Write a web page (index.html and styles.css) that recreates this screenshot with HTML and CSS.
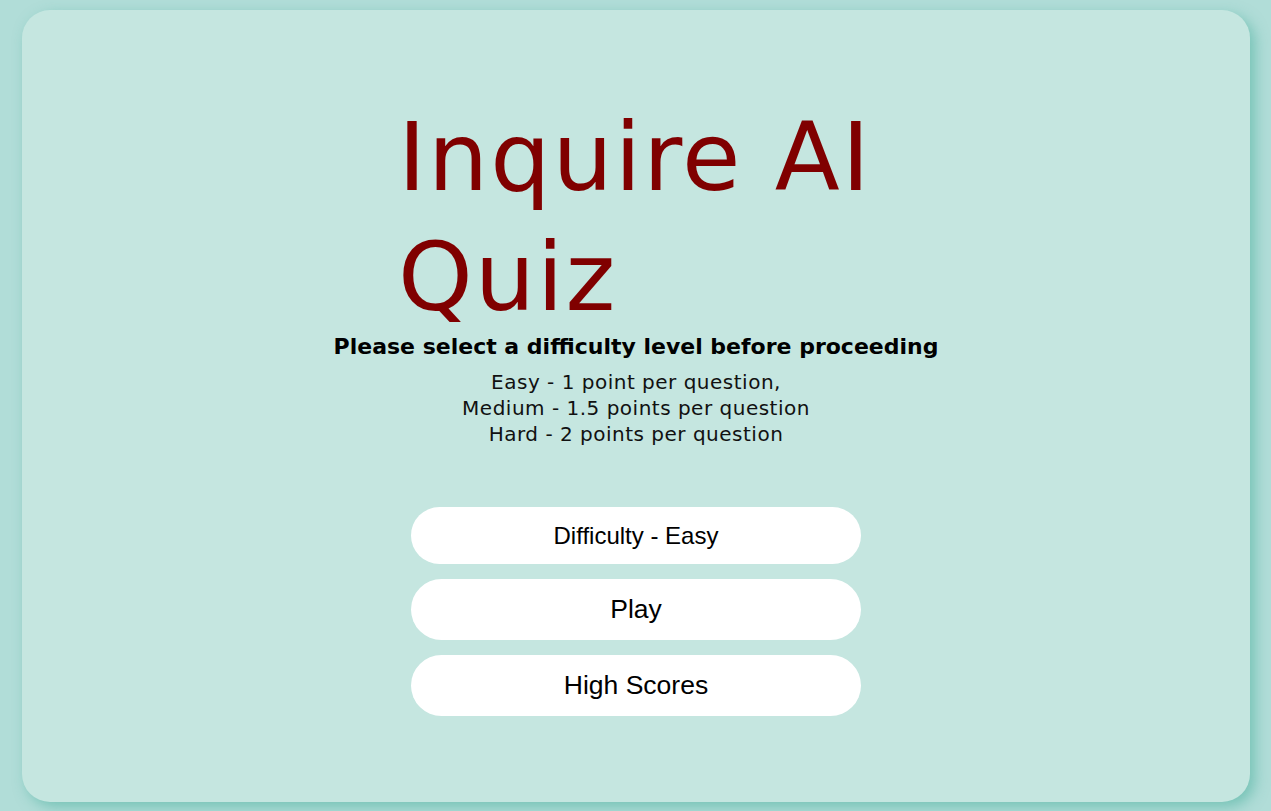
FILE: index.html
```html
<!DOCTYPE html>
<html lang="en">
<head>
<meta charset="utf-8">
<title>Inquire AI Quiz</title>
<link rel="stylesheet" href="styles.css">
</head>
<body>
<main class="card">
  <div class="intro">
    <h1 class="title">Inquire AI Quiz</h1>
    <h2 class="prompt">Please select a difficulty level before proceeding</h2>
    <p class="rules">Easy - 1 point per question,<br>Medium - 1.5 points per question<br>Hard - 2 points per question</p>
  </div>
  <div class="actions">
    <button class="btn btn-difficulty">Difficulty - Easy</button>
    <button class="btn btn-main">Play</button>
    <button class="btn btn-main">High Scores</button>
  </div>
</main>
</body>
</html>
```

FILE: styles.css
```css
* { box-sizing: border-box; }

html, body {
  margin: 0;
  height: 100%;
}

body {
  background: #b1ddd8;
  padding: 10px 21px 9px 22px;
  font-family: "DejaVu Sans", sans-serif;
}

.card {
  height: 792px;
  background: #c5e6e0;
  border-radius: 28px;
  box-shadow: 5px 5px 14px rgba(60, 170, 150, 0.5);
  display: flex;
  flex-direction: column;
  align-items: center;
  padding-top: 87px;
}

.intro {
  display: flex;
  flex-direction: column;
  align-items: center;
}

.title {
  width: 490px;
  margin: 0 0 0 6px;
  font-size: 95px;
  font-weight: 400;
  line-height: 120px;
  letter-spacing: 2px;
  color: #800000;
  text-align: left;
  padding-left: 4px;
}

.prompt {
  margin: -3px 0 0;
  font-size: 22px;
  font-weight: 700;
  line-height: 26px;
  color: #000;
  text-align: center;
}

.rules {
  margin: 9px 0 0;
  font-size: 20px;
  line-height: 26px;
  letter-spacing: 0.5px;
  color: #111;
  text-align: center;
}

.actions {
  margin-top: 60px;
  display: flex;
  flex-direction: column;
  gap: 15px;
  width: 450px;
}

.btn {
  width: 100%;
  border: none;
  background: #fff;
  border-radius: 31px;
  font-family: "Liberation Sans", Arial, sans-serif;
  color: #000;
  cursor: pointer;
}

.btn-difficulty {
  height: 57px;
  font-size: 24px;
}

.btn-main {
  height: 61px;
  font-size: 26.5px;
}
```
